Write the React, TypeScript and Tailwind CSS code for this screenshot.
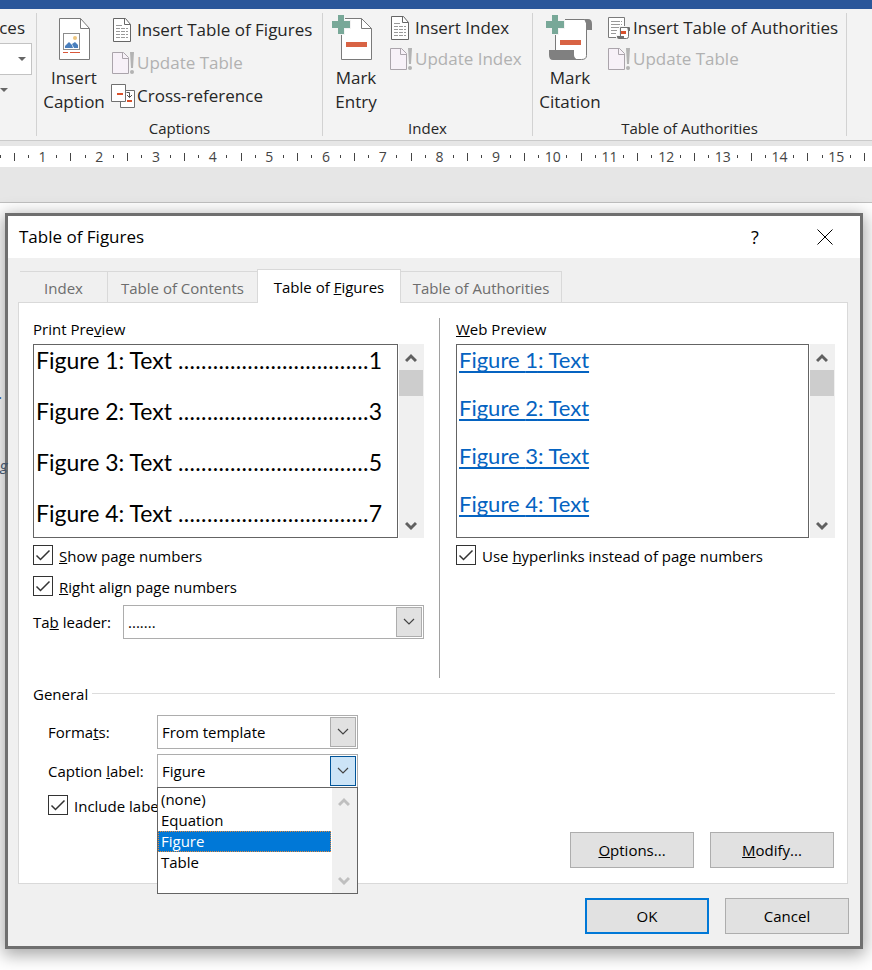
import { ReactNode, useState } from "react";

const RULER_CELLS = Array.from({ length: 62 }, (_, i) => i);

function PlusMark() {
  return <path d="M6 0h6v6h6v7h-6v6H6v-6H0V6h6z" fill="#78a898" />;
}

function InsertCaptionIcon() {
  return (
    <svg width="48" height="46" viewBox="0 0 48 46" aria-hidden="true">
      <path d="M9.500 3.500h21l9 10v31h-30z" fill="#fff" stroke="#7a7a7a" />
      <path d="M30.500 3.500v10h9" fill="none" stroke="#7a7a7a" />
      <rect x="13.500" y="18.500" width="16" height="16" fill="#fff" stroke="#8c8c8c" />
      <circle cx="25" cy="23" r="2" fill="#edc57d" />
      <path d="M15 33v-2l4-4 3 3 1 3z" fill="#4a7fbd" />
      <path d="M22 29l3-2 3 3v3h-4z" fill="#4a7fbd" />
      <path d="M13 37.500h5m2 0h10" stroke="#d9573a" />
    </svg>
  );
}

function MarkEntryIcon() {
  return (
    <svg width="48" height="46" viewBox="0 0 48 46" aria-hidden="true">
      <path d="M9.500 3.500h20l10 10v31h-30z" fill="#fff" stroke="#7a7a7a" />
      <path d="M29.500 3.500v10h10" fill="none" stroke="#7a7a7a" />
      <path d="M5 0h8v5h6v9h-6v6H0V5h5z" fill="#f3f3f3" />
      <PlusMark />
      <path d="M14 27h21v5H14z" fill="#d86344" />
    </svg>
  );
}

function MarkCitationIcon() {
  return (
    <svg width="48" height="46" viewBox="0 0 48 46" aria-hidden="true">
      <path d="M9.500 4.500h29q2 0 2 4v32q0 4-5 4h-26z" fill="#fff" stroke="#7a7a7a" />
      <path d="M38 4h4q4 0 4 5v6h-6V8z" fill="#808080" />
      <path d="M3 35h25v5q0 3 4 5H7q-4 0-4-5z" fill="#808080" />
      <path d="M5 0h8v4h6v10h-6v6H0V4h5z" fill="#f3f3f3" />
      <PlusMark />
      <path d="M14 25h21v5H14z" fill="#d86344" />
    </svg>
  );
}

function ListPageIcon() {
  return (
    <svg width="24" height="24" viewBox="0 0 24 24" aria-hidden="true">
      <path d="M2.500 .5h12l5 6v17h-17z" fill="#fff" stroke="#666" />
      <path d="M13.500 .5v6h6" fill="none" stroke="#666" />
      <path d="M5 7.500h6M5 10.500h4M10 10.500h4M5 13.500h4M10 13.500h4M5 16.500h4M10 16.500h4M5 19.500h4M10 19.500h4M15 10.500h2M15 13.500h2M15 16.500h2M15 19.500h2" stroke="#999" />
    </svg>
  );
}

function UpdateIcon() {
  return (
    <svg width="24" height="22" viewBox="0 0 24 22" aria-hidden="true">
      <path d="M1.500 .5h11l5 5v16h-16z" fill="#f7f1f8" stroke="#aaa4ab" />
      <path d="M11.500 .5v6h6" fill="none" stroke="#aaa4ab" />
      <path d="M19 0h4l-1 16h-2z" fill="#b3b3b3" />
      <circle cx="21" cy="20" r="2" fill="#b3b3b3" />
    </svg>
  );
}

function CrossReferenceIcon() {
  return (
    <svg width="24" height="24" viewBox="0 0 24 24" aria-hidden="true">
      <path d="M9.500 6.500h14v17h-14z" fill="#fff" stroke="#707070" />
      <path d="M.5 .5h14v17H.5z" fill="#fff" stroke="#707070" />
      <path d="M6 9h6v2H6zM16 16h5v2h-5z" fill="#d9512c" />
      <path d="M15.500 8.500h3v5M16 11l2.500 2.500L21 11" fill="none" stroke="#555" />
    </svg>
  );
}

function AuthoritiesIcon() {
  return (
    <svg width="24" height="24" viewBox="0 0 24 24" aria-hidden="true">
      <path d="M1.500 1.500h16v20h-16z" fill="#fff" stroke="#7a7a7a" />
      <path d="M4 5.500h9M14 5.500h1M4 8.500h9M14 8.500h1M4 11.500h8M4 14.500h6M4 17.500h5" stroke="#999" />
      <path d="M12 10h12v14H9v-5h3z" fill="#f3f3f3" />
      <path d="M13.500 11.500h8v9q0 2-2 2h-6z" fill="#fff" stroke="#707070" />
      <path d="M20 11h2q1 0 1 1v3h-2zM10 20h7v3h-5q-2 0-2-2z" fill="#707070" />
      <path d="M14 15h5v3h-5z" fill="#d9512c" />
    </svg>
  );
}

function BigButton({ icon, lines, width }: { icon: ReactNode; lines: [string, string]; width: string }) {
  return (
    <button className={`${width} flex shrink-0 flex-col items-center pt-0.5 text-[17px] leading-6`}>
      {icon}
      <span className="mt-[5px]">
        {lines[0]}
        <br />
        {lines[1]}
      </span>
    </button>
  );
}

function RowButton({ icon, label, height, disabled }: { icon: ReactNode; label: string; height: string; disabled?: boolean }) {
  return (
    <button
      disabled={disabled}
      className={`${height} flex items-center gap-0.5 text-[17px] whitespace-nowrap disabled:text-[#b1b1b1]`}
    >
      {icon}
      <span>{label}</span>
    </button>
  );
}

function Group({ title, width, children }: { title: string; width: string; children: ReactNode }) {
  return (
    <section aria-label={title} className={`${width} flex shrink-0 flex-col justify-between border-r border-[#d2d2d2]`}>
      <div className="flex items-start">{children}</div>
      <div className="pb-px text-center text-[15px] leading-[14px]">{title}</div>
    </section>
  );
}

function Ribbon() {
  return (
    <header className="overflow-hidden border-t-[9px] border-b border-t-[#2b579a] border-b-[#cacaca] bg-[#f3f3f3] py-1 text-[#262626]">
      <div className="flex h-[123px]">
        <section aria-label="Sources" className="flex w-[37px] shrink-0 flex-col border-r border-[#d2d2d2]">
          <div className="flex h-[30px] w-[25px] items-center justify-end text-[17px]">rces</div>
          <button aria-label="Style" className="flex h-8 w-8 items-center justify-end border border-l-0 border-[#c3c3c3] bg-white pr-[5px]">
            <svg width="8" height="4" viewBox="0 0 8 4" aria-hidden="true"><path d="M0 0h8L4 4z" fill="#666" /></svg>
          </button>
          <button aria-label="Bibliography" className="flex h-[30px] w-2 items-center">
            <svg width="8" height="4" viewBox="0 0 8 4" aria-hidden="true"><path d="M0 0h8L4 4z" fill="#666" /></svg>
          </button>
        </section>
        <Group title="Captions" width="w-[286px]">
          <BigButton icon={<InsertCaptionIcon />} lines={["Insert", "Caption"]} width="w-[74px]" />
          <div>
            <RowButton icon={<ListPageIcon />} label="Insert Table of Figures" height="h-[33px]" />
            <RowButton icon={<UpdateIcon />} label="Update Table" height="h-[33px]" disabled />
            <RowButton icon={<CrossReferenceIcon />} label="Cross-reference" height="h-[33px]" />
          </div>
        </Group>
        <Group title="Index" width="w-[210px]">
          <BigButton icon={<MarkEntryIcon />} lines={["Mark", "Entry"]} width="w-[66px]" />
          <div>
            <RowButton icon={<ListPageIcon />} label="Insert Index" height="h-[30px]" />
            <RowButton icon={<UpdateIcon />} label="Update Index" height="h-8" disabled />
          </div>
        </Group>
        <Group title="Table of Authorities" width="w-[314px]">
          <BigButton icon={<MarkCitationIcon />} lines={["Mark", "Citation"]} width="w-[74px]" />
          <div>
            <RowButton icon={<AuthoritiesIcon />} label="Insert Table of Authorities" height="h-[30px]" />
            <RowButton icon={<UpdateIcon />} label="Update Table" height="h-8" disabled />
          </div>
        </Group>
      </div>
    </header>
  );
}

function Ruler() {
  return (
    <div className="overflow-hidden border-b border-[#bfbfbf] bg-[#e6e6e6] pt-[5px] pb-[35px]">
      <div className="-ml-[7px] flex h-[21px] items-center bg-white text-sm text-[#444]">
        {RULER_CELLS.map((i) => (
          <div key={i} className="flex min-w-0 flex-1 justify-center">
            {i % 4 === 3 ? (
              <span>{(i + 1) / 4}</span>
            ) : i % 4 === 1 ? (
              <span className="h-2 w-px shrink-0 bg-[#444]" />
            ) : (
              <span className="h-[3px] w-px shrink-0 bg-[#444]" />
            )}
          </div>
        ))}
      </div>
    </div>
  );
}

function Chevron({ up, color }: { up?: boolean; color: string }) {
  return (
    <svg width="12" height="10" viewBox="0 0 12 10" aria-hidden="true">
      <path d={up ? "M1 8l5-5 5 5" : "M1 2l5 5 5-5"} fill="none" stroke={color} strokeWidth="3" />
    </svg>
  );
}

function ScrollBar({ disabled }: { disabled?: boolean }) {
  const color = disabled ? "#bfbfbf" : "#606060";
  return (
    <div className="flex w-[25px] shrink-0 flex-col bg-[#f0f0f0]">
      <button aria-label="Scroll up" className="flex h-[26px] items-center justify-center pt-0.5 pr-px">
        <Chevron up color={color} />
      </button>
      {!disabled && <div className="mr-px h-[26px] bg-[#cdcdcd]" />}
      <button aria-label="Scroll down" className="mt-auto flex h-[26px] items-center justify-center pt-px pr-px">
        <Chevron color={color} />
      </button>
    </div>
  );
}

function Check({ id, children }: { id: string; children: ReactNode }) {
  const [on, setOn] = useState(true);
  return (
    <div className="flex h-5 items-center gap-1.5">
      <span className="grid size-5 shrink-0">
        <input
          id={id}
          type="checkbox"
          checked={on}
          onChange={() => setOn(!on)}
          className="col-start-1 row-start-1 size-5 appearance-none border border-[#333] bg-white"
        />
        {on && (
          <svg className="pointer-events-none col-start-1 row-start-1" width="20" height="20" viewBox="0 0 20 20" aria-hidden="true">
            <path d="M3.500 10.500l4 4 9-9" fill="none" stroke="#333" strokeWidth="1.500" />
          </svg>
        )}
      </span>
      <label htmlFor={id} className="pt-0.5 whitespace-nowrap">{children}</label>
    </div>
  );
}

function Combo({ id, value, width, open }: { id: string; value: string; width: string; open?: boolean }) {
  return (
    <div className={`${width} grid h-[34px]`}>
      <select id={id} defaultValue={value} className="col-start-1 row-start-1 appearance-none border border-[#adadad] bg-white px-1">
        <option>{value}</option>
      </select>
      <span
        className={`${
          open ? "border-[#005499] bg-[#cce4f7]" : "border-[#adadad] bg-[#e1e1e1]"
        } pointer-events-none col-start-1 row-start-1 mr-0.5 flex h-[30px] w-[26px] items-center justify-center self-center justify-self-end border`}
      >
        <svg width="12" height="8" viewBox="0 0 12 8" aria-hidden="true">
          <path d="M1 1l5 5 5-5" fill="none" stroke="#444" strokeWidth="1.200" />
        </svg>
      </span>
    </div>
  );
}

function PrintPreview() {
  return (
    <div className="flex h-[194px] gap-px">
      <div className="min-w-0 flex-1 overflow-hidden border border-[#646464] pr-[15px] pl-0.5 font-['Lato',sans-serif] text-[23px] leading-[51px]">
        <div className="-mt-2.5">
          {[1, 2, 3, 4].map((n) => (
            <div key={n} className="flex">
              <span className="shrink-0">Figure {n}: Text</span>
              <span aria-hidden="true" className="ml-1.5 flex min-w-0 flex-1 justify-between">
                {Array.from({ length: 33 }, (_, i) => (
                  <span key={i} className="min-w-0">.</span>
                ))}
              </span>
              <span>{n * 2 - 1}</span>
            </div>
          ))}
        </div>
      </div>
      <ScrollBar />
    </div>
  );
}

function WebPreview() {
  return (
    <div className="flex h-[194px] gap-px">
      <div className="min-w-0 flex-1 overflow-hidden border border-[#646464] pl-0.5 font-['Lato',sans-serif] text-[22px] leading-[48px]">
        <div className="-mt-[9px]">
          {[1, 2, 3, 4].map((n) => (
            <div key={n}>
              <a href="#figure" className="text-[#0563c1] underline decoration-2 underline-offset-3 [text-decoration-skip-ink:none]">
                Figure {n}: Text
              </a>
            </div>
          ))}
        </div>
      </div>
      <ScrollBar />
    </div>
  );
}

const OPTIONS = ["(none)", "Equation", "Figure", "Table"];

function CaptionList() {
  return (
    <div className="absolute top-[33px] left-0 z-10 flex h-[107px] w-full border border-[#646464] bg-white">
      <ul role="listbox" aria-label="Caption label" className="flex-1 pt-px pr-px leading-[21px]">
        {OPTIONS.map((o) => (
          <li
            key={o}
            role="option"
            aria-selected={o === "Figure"}
            className="h-[21px] px-[3px] aria-selected:bg-[#0078d7] aria-selected:text-white aria-selected:outline aria-selected:-outline-offset-1 aria-selected:outline-dotted aria-selected:outline-[#e58a3c]"
          >
            {o}
          </li>
        ))}
      </ul>
      <ScrollBar disabled />
    </div>
  );
}

function PushButton({ children, primary }: { children: ReactNode; primary?: boolean }) {
  return (
    <button className={`${primary ? "border-2 border-[#0078d7]" : "border border-[#adadad]"} h-9 w-[124px] bg-[#e1e1e1]`}>
      {children}
    </button>
  );
}

function Tab({ children, width, active }: { children: ReactNode; width: string; active?: boolean }) {
  return (
    <button
      role="tab"
      aria-selected={!!active}
      className={`${width} ${
        active ? "relative -mb-px h-[34px] border-x bg-white text-black" : "h-[31px] text-[#6d6d6d]"
      } shrink-0 border-t border-[#d9d9d9] pt-0.5 whitespace-nowrap`}
    >
      {children}
    </button>
  );
}

function Dialog() {
  return (
    <div
      role="dialog"
      aria-label="Table of Figures"
      className="relative mt-2.5 mr-[9px] ml-[5px] border-[3px] border-[#6f6f6f] bg-[#f0f0f0] text-[15px] text-black shadow-[0_4px_16px_2px_rgba(0,0,0,0.35)]"
    >
      <div className="flex h-[42px] items-center bg-white pb-px pl-[11px]">
        <h1 className="flex-1 text-[17px]">Table of Figures</h1>
        <button aria-label="Help" className="w-[70px] text-lg">?</button>
        <button aria-label="Close" className="flex w-[70px] justify-center">
          <svg width="16" height="16" viewBox="0 0 16 16" aria-hidden="true">
            <path d="M.5 .5l15 15M15.500 .5l-15 15" stroke="#000" />
          </svg>
        </button>
      </div>

      <div className="pt-[11px] pr-[11px] pb-3 pl-2.5">
        <div role="tablist" className="flex items-end pl-0.5">
          <Tab width="w-[87px]">Index</Tab>
          <div className="flex border-l border-[#d9d9d9]">
            <Tab width="w-[149px]">Table of Contents</Tab>
          </div>
          <Tab width="w-[144px]" active>Table of <u>F</u>igures</Tab>
          <div className="flex border-r border-[#d9d9d9]">
            <Tab width="w-[160px]">Table of Authorities</Tab>
          </div>
        </div>

        <div className="mr-px border border-[#d9d9d9] bg-white pt-[15px] pr-3 pb-[15px] pl-3.5">
          <div className="grid grid-cols-[407fr_395fr]">
            <section className="h-[360px] min-w-0 border-r border-[#a0a0a0] pr-[15px]">
              <h2 className="h-[26px] leading-[22px]">Print Pre<u>v</u>iew</h2>
              <PrintPreview />
              <div className="mt-[7px] flex flex-col gap-[11px]">
                <Check id="show"><u>S</u>how page numbers</Check>
                <Check id="align"><u>R</u>ight align page numbers</Check>
              </div>
              <div className="mt-[9px] flex items-center">
                <label htmlFor="leader" className="w-[90px] shrink-0">Ta<u>b</u> leader:</label>
                <Combo id="leader" value="......." width="min-w-0 flex-1" />
              </div>
            </section>
            <section className="min-w-0 pl-4">
              <h2 className="h-[26px] leading-[22px]"><u>W</u>eb Preview</h2>
              <WebPreview />
              <div className="mt-[7px]">
                <Check id="links">Use <u>h</u>yperlinks instead of page numbers</Check>
              </div>
            </section>
          </div>

          <div className="mt-[5px] flex h-[22px] items-center gap-1">
            <h2>General</h2>
            <div className="mb-0.5 h-px flex-1 bg-[#dcdcdc]" />
          </div>
          <div className="mt-2.5 flex items-end justify-between pr-px">
            <div className="flex h-[153px] flex-col pl-[15px]">
              <div className="flex items-center">
                <label htmlFor="formats" className="w-[109px]">Forma<u>t</u>s:</label>
                <Combo id="formats" value="From template" width="w-[201px]" />
              </div>
              <div className="mt-[5px] flex items-center">
                <label htmlFor="caption" className="w-[109px]">Caption <u>l</u>abel:</label>
                <div className="relative">
                  <Combo id="caption" value="Figure" width="w-[201px]" open />
                  <CaptionList />
                </div>
              </div>
              <div className="mt-[7px]">
                <Check id="include">Include label</Check>
              </div>
            </div>
            <div className="flex gap-4">
              <PushButton><u>O</u>ptions...</PushButton>
              <PushButton><u>M</u>odify...</PushButton>
            </div>
          </div>
        </div>

        <div className="mt-3.5 flex justify-end gap-4">
          <PushButton primary>OK</PushButton>
          <PushButton>Cancel</PushButton>
        </div>
      </div>
    </div>
  );
}

export default function App() {
  return (
    <div className="min-h-screen overflow-hidden bg-white font-['Open_Sans','Noto_Sans',sans-serif]">
      <Ribbon />
      <Ruler />
      <main className="relative flow-root pb-[21px]">
        <Dialog />
        <span className="absolute top-[178px] -left-0.5 text-base text-[#2f5496]">.</span>
        <span className="absolute top-[250px] left-0 font-['Lato',sans-serif] text-base text-[#44546a] italic">g</span>
      </main>
    </div>
  );
}
